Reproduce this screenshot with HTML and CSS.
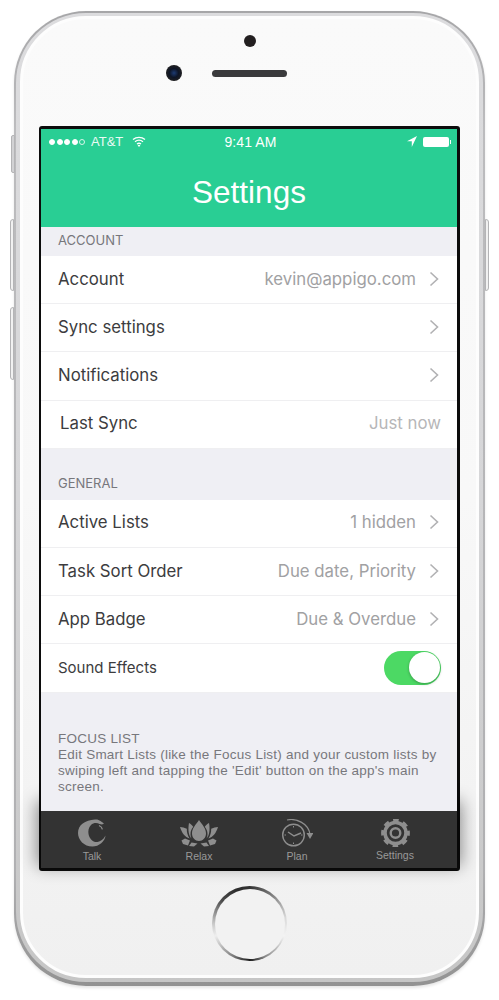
FILE: index.html
```html
<!DOCTYPE html>
<html lang="en">
<head>
<meta charset="utf-8">
<title>Settings</title>
<link rel="stylesheet" href="styles.css">
</head>
<body>
<div class="phone">
  <span class="btn btn-mute"></span>
  <span class="btn btn-up"></span>
  <span class="btn btn-down"></span>
  <span class="btn btn-power"></span>
  <div class="bezel">
    <div class="face">
      <div class="sensor"></div>
      <div class="earpiece">
        <div class="camera"></div>
        <div class="speaker"></div>
        <div class="cam-spacer"></div>
      </div>
      <div class="screen">
        <div class="hero">
          <div class="status">
            <div class="status-left">
              <span class="dots"><i></i><i></i><i></i><i></i><i class="off"></i></span>
              <span class="carrier">AT&amp;T</span>
              <svg class="wifi" width="14" height="11" viewBox="0 0 14 11"><path d="M1 3.6C4.4.6 9.6.6 13 3.6M3 5.8c2.4-2 5.6-2 8 0M5 8c1.2-.9 2.800-.9 4 0" fill="none" stroke="#fff" stroke-width="1.300"/><path d="M7 11 5.600 9.300c.8-.5 2-.5 2.800 0z" fill="#fff"/></svg>
            </div>
            <span class="time">9:41 AM</span>
            <div class="status-right">
              <svg width="10" height="11" viewBox="0 0 10 11"><path d="M10 0 0 5.200h4.800V11z" fill="#fff"/></svg>
              <span class="battery"></span>
            </div>
          </div>
          <h1 class="title">Settings</h1>
        </div>
        <div class="content">
          <div class="section-label first">ACCOUNT</div>
          <div class="row"><span class="label">Account</span><span class="value">kevin@appigo.com</span><svg class="chev" width="10" height="16" viewBox="0 0 10 16"><path d="M1.500 1.500 8.500 8l-7 6.500"/></svg></div>
          <div class="row"><span class="label">Sync settings</span><span class="value"></span><svg class="chev" width="10" height="16" viewBox="0 0 10 16"><path d="M1.500 1.500 8.500 8l-7 6.500"/></svg></div>
          <div class="row"><span class="label">Notifications</span><span class="value"></span><svg class="chev" width="10" height="16" viewBox="0 0 10 16"><path d="M1.500 1.500 8.500 8l-7 6.500"/></svg></div>
          <div class="row row-sync"><span class="label">Last Sync</span><span class="value">Just now</span></div>
          <div class="section-label">GENERAL</div>
          <div class="row"><span class="label">Active Lists</span><span class="value">1 hidden</span><svg class="chev" width="10" height="16" viewBox="0 0 10 16"><path d="M1.500 1.500 8.500 8l-7 6.500"/></svg></div>
          <div class="row"><span class="label">Task Sort Order</span><span class="value">Due date, Priority</span><svg class="chev" width="10" height="16" viewBox="0 0 10 16"><path d="M1.500 1.500 8.500 8l-7 6.500"/></svg></div>
          <div class="row"><span class="label">App Badge</span><span class="value">Due &amp; Overdue</span><svg class="chev" width="10" height="16" viewBox="0 0 10 16"><path d="M1.500 1.500 8.500 8l-7 6.500"/></svg></div>
          <div class="row row-toggle"><span class="label small">Sound Effects</span><span class="toggle"><span class="knob"></span></span></div>
          <div class="note">
            <div>FOCUS LIST</div>
            <div>Edit Smart Lists (like the Focus List) and your custom lists by swiping left and tapping the 'Edit' button on the app's main screen.</div>
          </div>
        </div>
        <nav class="tabs">
          <div class="tab tab-talk">
            <svg width="28" height="28" viewBox="0 0 28 28"><path fill="#8e8e8e" d="M17 .5C19.500.3 21 1 22.500 2L26 4.500 24 5.500 21.500 5C19 3.700 15.500 3.700 13 6 10.500 8.500 10 12 10.500 15 11.500 20 15 23.500 19.500 23 22.500 22.500 25.500 20.500 27.500 16.500 27 22.500 21 27.500 14.500 27.500 6 27.500 0 21 0 14 0 6 7 1 17 .5z"/><path fill="none" stroke="#8e8e8e" stroke-width="1.300" d="M21 6.500c2 .8 3 2 3.400 3.800"/></svg>
            <span>Talk</span>
          </div>
          <div class="tab tab-relax">
            <svg width="38" height="27" viewBox="0 0 38 27" fill="#8e8e8e"><path d="M19 0c3 4.500 7 8 7 13.500 0 4.200-3.100 7.500-7 7.500s-7-3.300-7-7.500C12 8 16 4.500 19 0z"/><path d="M9 3c1.800 1 3.300 2.300 4.200 3.700-1.800 2.200-2.700 4.500-2.700 7.500 0 1.500.3 2.900 1 4.200C8.700 15.800 7.700 10 9 3z"/><path d="M29 3c-1.800 1-3.300 2.300-4.200 3.700 1.800 2.200 2.700 4.500 2.700 7.500 0 1.500-.3 2.900-1 4.200 2.800-2.600 3.800-8.400 2.500-15.400z"/><path d="M0 7c2.200.2 4.600.8 6.800 1.800-.1 3.700.8 6.700 2.800 9.700C5 17 1.800 13 0 7z"/><path d="M38 7c-2.200.2-4.600.8-6.800 1.800.1 3.700-.8 6.700-2.800 9.700 4.600-1.500 7.800-5.500 9.600-11.500z"/><path d="M1.500 20.500 5 18.500l5 2L8 25.500 3 24z"/><path d="M36.500 20.500 33 18.500l-5 2 2 5 5-1.500z"/><path d="M11.500 22.500 17.500 23.500l-3.500 3-5-.5z"/><path d="M26.500 22.500 20.500 23.500l3.500 3 5-.5z"/></svg>
            <span>Relax</span>
          </div>
          <div class="tab tab-plan">
            <svg width="31" height="28" viewBox="0 0 31 28" fill="none" stroke="#8e8e8e"><circle cx="11.500" cy="16" r="10.800" stroke-width="1.400"/><path d="M6 13l6 4 7-3" stroke-width="1.500"/><path d="M11.500 7v1.500M11.500 23.500V25M2.500 16H4M19 16h1.500" stroke-width="1"/><path d="M5 1c9-2 21 3 23 14" stroke-width="1.200"/><path d="M24.500 14h7L28 20z" fill="#8e8e8e" stroke="none"/></svg>
            <span>Plan</span>
          </div>
          <div class="tab tab-settings">
            <svg width="29" height="28" viewBox="0 0 29 28" fill="none" stroke="#8e8e8e"><circle cx="14.500" cy="14" r="10.500" stroke-width="3.600"/><circle cx="14.500" cy="14" r="12.800" stroke-width="3.200" stroke-dasharray="5.500 4.553" stroke-dashoffset="2.750"/><circle cx="14.500" cy="14" r="4.800" stroke-width="2.400"/></svg>
            <span>Settings</span>
          </div>
        </nav>
      </div>
      <div class="home"><div class="home-inner"></div></div>
    </div>
  </div>
</div>
</body>
</html>
```
FILE: styles.css
```css
* { box-sizing: border-box; }
html, body { margin: 0; padding: 0; background: #fff; }
body { width: 499px; height: 1000px; overflow: hidden; font-family: "Inter", "Liberation Sans", sans-serif; }

.phone {
  position: relative;
  width: 471px;
  height: 975px;
  margin: 11px 0 0 14px;
  padding: 2px 2px 4px;
  border-radius: 72px;
  background: linear-gradient(#a6a6a8, #bcbcbe 12%, #b0b0b2 88%, #929292);
  box-shadow: 0 2px 3px rgba(0,0,0,.1);
}
.btn {
  position: absolute;
  width: 4px;
  background: #f1f1f1;
  border: 1px solid #b4b4b6;
}
.btn-mute { left: -3px; top: 124px; height: 38px; border-radius: 2px 0 0 2px; background: #d2d2d4; }
.btn-up { left: -4px; top: 208px; height: 72px; border-radius: 3px 0 0 3px; }
.btn-down { left: -4px; top: 296px; height: 73px; border-radius: 3px 0 0 3px; }
.btn-power { right: -4px; top: 208px; height: 72px; border-radius: 0 3px 3px 0; }

.bezel {
  height: 100%;
  padding: 3px 4px 4px;
  border-radius: 70px;
  background: linear-gradient(#dcdcde, #d6d6d8 50%, #c6c6c6);
}
.face {
  height: 100%;
  border: 3px solid #fdfdfd;
  border-radius: 66px;
  background: linear-gradient(#fafafa, #f8f8f8 50%, #f0f0f0);
  display: flex;
  flex-direction: column;
  align-items: center;
  padding-top: 16px;
}
.sensor {
  width: 12px;
  height: 12px;
  border-radius: 50%;
  background: #231f20;
}
.earpiece {
  display: flex;
  align-items: center;
  gap: 30px;
  margin-top: 18px;
}
.camera {
  width: 16px;
  height: 16px;
  border-radius: 50%;
  background: radial-gradient(circle at 50% 50%, #1d3b73 0, #0e1526 40%, #1f1f21 70%, #77777a 100%);
}
.cam-spacer { width: 16px; }
.speaker {
  width: 75px;
  height: 7px;
  border-radius: 4px;
  background: #3a3a3c;
}

.screen {
  width: 421px;
  height: 745px;
  margin-top: 45px;
  border: 3px solid #0c0c0c;
  border-width: 3px 3px 3px 2px;
  border-radius: 3px;
  background: #0c0c0c;
  display: flex;
  flex-direction: column;
}
.hero {
  height: 98px;
  background: #29ce94;
  color: #fff;
  position: relative;
  z-index: 1;
  display: flex;
  flex-direction: column;
}
.status {
  display: grid;
  grid-template-columns: 1fr auto 1fr;
  align-items: center;
  height: 25px;
  padding: 0 5px 0 8px;
  font-family: "Liberation Sans", sans-serif;
  font-size: 13px;
}
.status-left { display: flex; align-items: center; gap: 6px; }
.dots { display: flex; gap: 1.500px; }
.dots i {
  width: 6px;
  height: 6px;
  border-radius: 50%;
  background: #fff;
  border: 1px solid #fff;
}
.dots i.off { background: transparent; border-color: #d8f5ea; border-width: .8px; }
.carrier { color: #eafaf4; }
.wifi { margin-left: 3px; }
.time { font-size: 14px; letter-spacing: .1px; }
.status-right { display: flex; justify-content: flex-end; align-items: center; gap: 6px; }
.battery {
  position: relative;
  width: 26px;
  height: 10px;
  background: #fff;
  border-radius: 2px;
  margin-right: 3px;
}
.battery::after {
  content: "";
  position: absolute;
  right: -2px;
  top: 3px;
  width: 1.500px;
  height: 4px;
  background: #fff;
}
.title {
  margin: 0;
  text-align: center;
  font-family: "Liberation Sans", sans-serif;
  font-weight: 400;
  font-size: 31.500px;
  line-height: 33px;
  padding-top: 22px;
}

.content {
  height: 584px;
  overflow: hidden;
  background: #efeff4;
  position: relative;
  z-index: 1;
}
.section-label {
  height: 51px;
  padding: 0 17px 9px;
  display: flex;
  align-items: flex-end;
  font-size: 13px;
  line-height: 15px;
  color: #77777c;
}
.section-label.first { height: 29px; padding-bottom: 8px; }
.row {
  height: 48.200px;
  display: flex;
  align-items: center;
  padding: 0 18px 2px 17px;
  background: #fff;
  border-bottom: 1px solid #efeff1;
  font-size: 16.800px;
  color: #3c3c3e;
}
.label { flex: 1; }
.label.small { font-size: 15px; }
.value { color: #a1a1a3; margin-right: 13px; }
.chev { fill: none; stroke: #b1b1b3; stroke-width: 1.600; }
.row-sync .label { padding-left: 2px; }
.row-sync { padding-right: 16px; }
.row-sync .value { margin-right: 0; color: #b6b6b8; }
.row-toggle { padding: 0 16px 0 17px; }

.toggle {
  width: 57px;
  height: 34px;
  border-radius: 17px;
  background: #4cd964;
  display: flex;
  justify-content: flex-end;
  padding: 1.500px;
}
.knob {
  width: 31px;
  height: 31px;
  border-radius: 50%;
  background: #fff;
  box-shadow: 0 1px 3px rgba(0,0,0,.3);
}
.note {
  padding: 38px 17px 0;
  font-family: "Liberation Sans", sans-serif;
  font-size: 13.500px;
  letter-spacing: .23px;
  line-height: 16px;
  color: #77777c;
}

.tabs {
  flex: 1;
  display: grid;
  grid-template-columns: 102px 112px 84px 112px;
  background: #333;
  box-shadow: 0 -6px 16px 4px rgba(0,0,0,.45);
}
.tab {
  display: flex;
  flex-direction: column;
  align-items: center;
  padding-top: 8px;
  font-family: "Liberation Sans", sans-serif;
  font-size: 10.500px;
  line-height: 12px;
  color: #999;
}
.tab span { margin-top: 3px; }
.tab-settings span { margin-top: 2px; }
.tab-relax svg { margin-top: 1px; }
.home {
  width: 75px;
  height: 75px;
  margin-top: 15px;
  padding: 2.500px;
  border-radius: 50%;
  background: conic-gradient(#333 0deg, #777 35deg, #d8d8d8 80deg, #f4f4f4 110deg, #888 155deg, #1d1d1d 180deg, #777 205deg, #eee 250deg, #c8c8c8 270deg, #4a4a4a 310deg, #2c2c2c 340deg, #333 360deg);
}
.home-inner {
  width: 100%;
  height: 100%;
  border-radius: 50%;
  background: #f2f2f2;
}
```
